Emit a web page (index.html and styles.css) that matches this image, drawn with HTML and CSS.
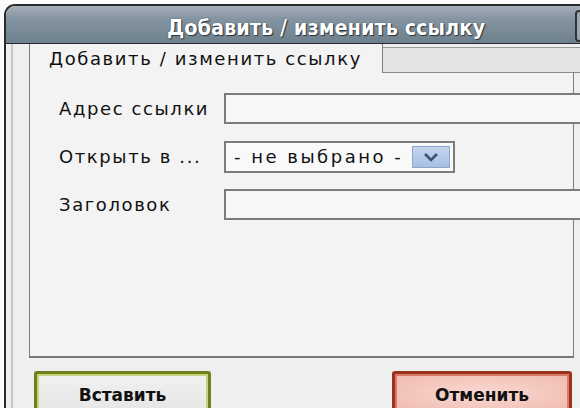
FILE: index.html
```html
<!DOCTYPE html>
<html lang="ru">
<head>
<meta charset="utf-8">
<title>Добавить / изменить ссылку</title>
<link rel="stylesheet" href="styles.css">
</head>
<body>
<div class="window">
  <div class="titlebar">
    <div class="title">Добавить / изменить ссылку</div>
    <div class="close"></div>
  </div>
  <div class="client">
    <div class="frame">
      <div class="tabs">
        <div class="tab active">Добавить / изменить ссылку</div>
        <div class="tab rest"></div>
      </div>
      <div class="panel">
        <div class="row">
          <label class="label">Адрес ссылки</label>
          <div class="field"></div>
        </div>
        <div class="row">
          <label class="label">Открыть в ...</label>
          <div class="select">
            <span class="select-text">- не выбрано -</span>
            <span class="drop">
              <svg width="16" height="10" viewBox="0 0 16 10"><polyline points="2,2 8,8 14,2" fill="none" stroke="#3b5276" stroke-width="2.6"/></svg>
            </span>
          </div>
        </div>
        <div class="row">
          <label class="label">Заголовок</label>
          <div class="field"></div>
        </div>
      </div>
      <div class="buttons">
        <div class="btn insert">Вставить</div>
        <div class="btn cancel">Отменить</div>
      </div>
    </div>
  </div>
</div>
</body>
</html>
```

FILE: styles.css
```css
html, body {
  margin: 0;
  padding: 0;
  background: #fbfbfb;
  width: 580px;
  height: 408px;
  overflow: hidden;
}
body {
  padding: 4px 0 0 4px;
  box-sizing: border-box;
}
.window {
  width: 640px;
  height: 420px;
  border-left: 2px solid #2b2b2b;
  border-top: 2px solid #2b2b2b;
  border-top-left-radius: 11px;
  overflow: hidden;
  background: #efefef;
}
.titlebar {
  position: relative;
  height: 38px;
  box-sizing: border-box;
  padding-top: 5px;
  background: linear-gradient(#a4aeb7 0%, #8494a1 35%, #6f808d 100%);
  border-bottom: 1px solid #2a2a2a;
  display: flex;
  align-items: center;
  justify-content: center;
}
.title {
  font-family: "DejaVu Sans Condensed", "DejaVu Sans", sans-serif;
  font-weight: bold;
  font-size: 21.5px;
  color: #ffffff;
  text-shadow: 0 0 1px #1e2830, 1px 1px 1px #2c3740;
}
.close {
  position: absolute;
  left: 569px;
  top: 4px;
  width: 30px;
  height: 28px;
  border: 2px solid #333;
  border-radius: 4px;
  background: #9aa6b0;
}
.client {
  padding-left: 5px;
  height: 100%;
}
.frame {
  border-left: 2px solid #c6c6c6;
  padding-left: 16px;
  height: 100%;
}
.tabs {
  display: flex;
  height: 29px;
}
.tab {
  font-family: "DejaVu Sans", sans-serif;
  font-size: 18px;
  color: #111;
  box-sizing: border-box;
}
.tab.active {
  flex: none;
  width: 354px;
  border-left: 1px solid #7e7e7e;
  border-right: 1px solid #7e7e7e;
  background: #f3f3f3;
  padding: 4px 0 0 19px;
  letter-spacing: 1.6px;
  white-space: nowrap;
}
.tab.rest {
  flex: 1;
  margin-top: 3px;
  background: #e4e4e4;
  border-top: 1px solid #9a9a9a;
  border-bottom: 1px solid #8a8a8a;
}
.panel {
  width: 545px;
  height: 285px;
  box-sizing: border-box;
  border-left: 1px solid #7e7e7e;
  border-right: 1px solid #7e7e7e;
  border-bottom: 2px solid #777;
  background: #f3f3f3;
  padding-top: 20px;
}
.row {
  display: flex;
  align-items: center;
  height: 31px;
  margin-bottom: 17px;
}
.label {
  flex: none;
  width: 194px;
  padding-left: 29px;
  box-sizing: border-box;
  white-space: nowrap;
  font-family: "DejaVu Sans", sans-serif;
  font-size: 18px;
  letter-spacing: 1.6px;
  color: #111;
}
.field {
  flex: none;
  width: 380px;
  height: 31px;
  box-sizing: border-box;
  border: 2px solid #7c7c7c;
  background: #f7f7f7;
}
.select {
  flex: none;
  width: 231px;
  height: 32px;
  box-sizing: border-box;
  border: 2px solid #7c7c7c;
  background: #f9f9f9;
  display: flex;
  align-items: center;
  justify-content: space-between;
  padding: 0 3px 0 8px;
}
.select-text {
  font-family: "DejaVu Sans", sans-serif;
  font-size: 18px;
  letter-spacing: 2.5px;
  white-space: nowrap;
  color: #111;
}
.drop {
  width: 38px;
  height: 22px;
  box-sizing: border-box;
  border: 1px solid #8ea6c9;
  background: linear-gradient(#c4d5ee, #a9c0e2);
  display: flex;
  align-items: center;
  justify-content: center;
}
.buttons {
  display: flex;
  justify-content: space-between;
  width: 543px;
  margin-top: 13px;
  padding-left: 5px;
  box-sizing: border-box;
}
.btn {
  height: 44px;
  box-sizing: border-box;
  border-radius: 3px 3px 0 0;
  font-family: "DejaVu Sans", sans-serif;
  font-weight: bold;
  font-size: 17px;
  color: #111;
  text-align: center;
  padding-top: 11px;
}
.btn.insert {
  width: 177px;
  border: 3px solid #6f7f1c;
  box-shadow: inset 0 0 0 2px #c8d47a;
  background: linear-gradient(#f1f1f1, #e6e6e6);
}
.btn.cancel {
  width: 180px;
  border: 3px solid #9c3320;
  box-shadow: inset 0 0 0 2px #d97a66;
  background: radial-gradient(ellipse at center, #f9d9d2, #f0b9ae);
}
```
